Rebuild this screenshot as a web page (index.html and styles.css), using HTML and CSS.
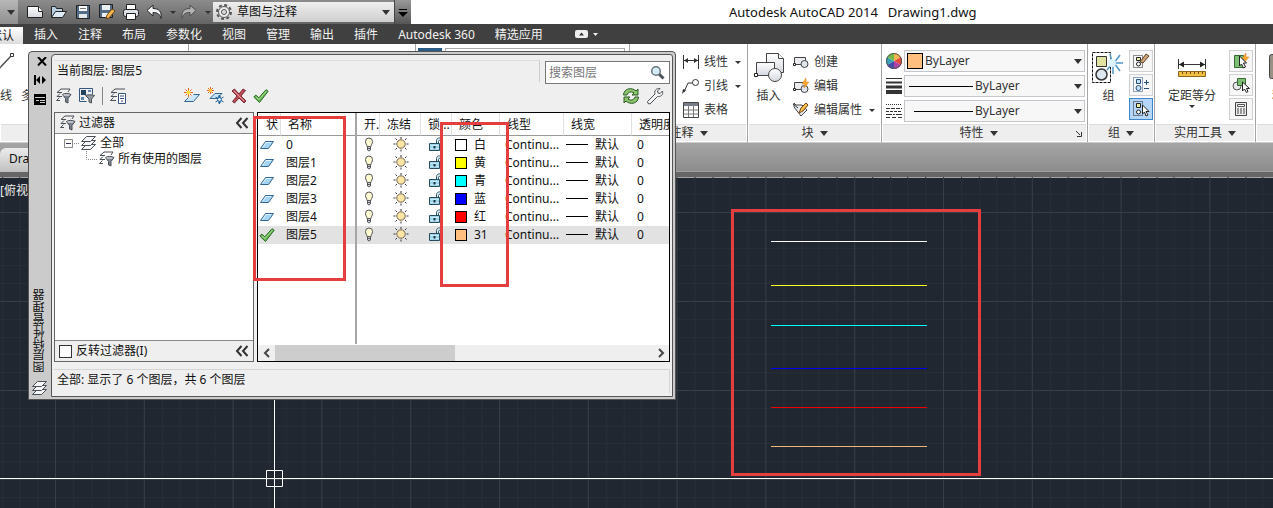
FILE: index.html
```
<!DOCTYPE html>
<html lang="zh-CN">
<head>
<meta charset="utf-8">
<title>Autodesk AutoCAD 2014 - Drawing1.dwg</title>
<link rel="stylesheet" href="styles.css">
</head>
<body>
<svg class="defs" aria-hidden="true">
  <defs>
    <linearGradient id="paper" x1="0" y1="0" x2="0" y2="1"><stop offset="0" stop-color="#fff"/><stop offset="1" stop-color="#d4d8e0"/></linearGradient>
    <symbol id="i-stack" viewBox="0 0 18 18"><g fill="#f4f5f6" stroke="#4a4f55"><path d="M1.500 15.500h9l5-5h-9z"/><path d="M1.500 11.500h9l5-5h-9z"/><path d="M1.500 7.500h9l5-5h-9z"/></g></symbol>
    <symbol id="i-filter" viewBox="0 0 18 18"><path d="M5 13.500H1.500l3-3M7 9.500H2l3-3M7 5.500H2l4-3.500h9l-2 3" fill="none" stroke="#4a4f55"/><path d="M7.500 7.500c2-1.500 6-1.500 8.500 0l-3 4v4.500l-2.500-1v-3.500z" fill="#7c8390" stroke="#4a4f55"/><path d="M8.500 8h6" stroke="#fff"/></symbol>
    <symbol id="i-group-filter" viewBox="0 0 18 18"><path d="M1.500 1.500h13v6M1.500 1.500v13h7" fill="none" stroke="#36577b"/><path d="M3 3h5v5H3z" fill="#23425f"/><path d="M10 3h3v2h-3zM3 10h3v3H3z" fill="#5c87af"/><path d="M7.500 8.500c2-1 6-1 9 0l-3 3.500v4l-2.500-1v-3z" fill="#9299a3" stroke="#4a4f55"/></symbol>
    <symbol id="i-states" viewBox="0 0 18 18"><path d="M7 13.500H1.500l3-3M8 9.500H2l3-3M8 5.500H2l4-3.500h10" fill="none" stroke="#4a4f55"/><path d="M9.500 6.500h7v10h-7z" fill="#fff" stroke="#36577b"/><path d="M11 9h4M11 11.500h4M12 14h2" stroke="#36577b"/></symbol>
    <symbol id="i-layer" viewBox="0 0 16 16"><path d="M1.500 11.500l5-7h8l-5 7z" fill="#a6d4f5" stroke="#34668f"/><path d="M3.500 10.500l3.500-5h5" stroke="#dff2ff" fill="none"/></symbol>
    <symbol id="i-new-layer" viewBox="0 0 18 18"><path d="M1.500 14.500h9l6-7h-6M1.500 14.500l4-4" fill="#c8e5fa" stroke="#34668f"/><path d="M5.500 1v9M1 5.500h9M2.500 2.500l6 6M8.500 2.500l-6 6" stroke="#e3641e"/><circle cx="5.500" cy="5.500" r="2" fill="#ffdf3e"/></symbol>
    <symbol id="i-new-frozen" viewBox="0 0 18 18"><path d="M3 11.500h7l5-5H8z" fill="#c8e5fa" stroke="#34668f"/><path d="M3.500 0v7M0 3.500h7M1 1l5 5M6 1L1 6" stroke="#e3641e"/><circle cx="3.500" cy="3.500" r="1.500" fill="#ffdf3e"/><path d="M12.500 8v9M8.500 10l8 5M8.500 15l8-5M11 9l3 1M11 16l3-1" stroke="#236197"/><circle cx="12.500" cy="12.500" r="2" fill="#d4edff" stroke="#236197"/></symbol>
    <symbol id="i-delete" viewBox="0 0 16 16"><path d="M1 3l2.500-2L8 6l4-5 2.500 1.500L10 8l5 5-2 2-5-5-4.500 5L1.500 13.500 6 8z" fill="#bd4c55" stroke="#722b34"/><path d="M3 3l10 10" stroke="#e6a0a6"/></symbol>
    <symbol id="i-check" viewBox="0 0 16 16"><path d="M.8 9l2-2 3 2.800L13 1.700l2.200 1.500L6.500 14.500z" fill="#67b653" stroke="#2d6b29"/><path d="M3 9l3 2.500L13.500 3" fill="none" stroke="#a5dc92"/></symbol>
    <symbol id="i-bulb" viewBox="0 0 16 16"><path d="M6 9.500c0-2-1.500-2.500-1.500-5a3.500 3.500 0 017 0c0 2.500-1.500 3-1.500 5z" fill="#fffbd0" stroke="#54565a"/><path d="M6.500 9.500h3V13L8 14 6.500 13z" fill="#cdd1d5" stroke="#54565a"/><path d="M6 11.500h4" stroke="#54565a"/></symbol>
    <symbol id="i-sun" viewBox="0 0 16 16"><path d="M8 0v2M8 12.500v2M.5 7h2M13.500 7h2M2.500 1.500L4 3M12 11l1.500 1.500M13.500 1.500L12 3M4 11l-1.500 1.500" stroke="#333"/><circle cx="8" cy="7" r="4.200" fill="#fde6a4" stroke="#6f6553"/></symbol>
    <symbol id="i-lock" viewBox="0 0 18 16"><path d="M8.500 7V3.500c0-3.500 6-3.500 6 0v2h-2V4.500c0-1.500-2-1.500-2 0V7" fill="#d7edf6" stroke="#2d5261"/><path d="M1.500 6.500h10v7h-10z" fill="#9fd4ea" stroke="#244c5c"/><path d="M2 8.500h9M2 11.500h9" stroke="#c5eafa"/><path d="M6.500 9v2.500" stroke="#153443" stroke-width="2"/></symbol>
    <symbol id="i-chevrons" viewBox="0 0 14 12"><path d="M6.500 1L2 6l4.500 5M12.500 1L8 6l4.500 5" fill="none" stroke="#333" stroke-width="2"/></symbol>
    <symbol id="i-search" viewBox="0 0 16 16"><path d="M9 9l4.500 4.500" stroke="#4c5259" stroke-width="3"/><circle cx="6" cy="6" r="4.300" fill="#d4ecf5" stroke="#697780" stroke-width="1.500"/></symbol>
    <symbol id="i-refresh" viewBox="0 0 18 18"><path d="M1.500 8C2 1 10 0 14 4l2-2v6h-6l2-2C9 4 6 5 5 8z" fill="#8cc46c" stroke="#285a26"/><path d="M16.500 10c-.5 7-8.500 8-12.500 4l-2 2v-6h6l-2 2c3 2 6 1 7-2z" fill="#8cc46c" stroke="#285a26"/></symbol>
    <symbol id="i-wrench" viewBox="0 0 18 18"><path d="M1.500 14.500L9 7c-1-3 1-6 5-5.500L11.500 4l.5 2 2 .5L16.500 4c1 4-2 6-5 5.500L4 17l-2-.5z" fill="#f3f4f5" stroke="#4f5459"/></symbol>
    <symbol id="i-rows" viewBox="0 0 16 16"><path d="M0 .5h16" stroke="#333"/><path d="M0 4.500h16" stroke="#333" stroke-width="2"/><path d="M0 9h16" stroke="#333" stroke-width="3"/><path d="M0 14h16" stroke="#333" stroke-width="4"/></symbol>
    <symbol id="i-dashes" viewBox="0 0 16 14"><g stroke="#333"><path d="M0 .5h16" stroke-dasharray="1 1"/><path d="M0 4.500h16" stroke-dasharray="4 1"/><path d="M0 7.500h16" stroke-dasharray="3 1"/><path d="M0 10.500h16" stroke-dasharray="6 1 2 1"/><path d="M0 13.500h16" stroke-dasharray="4 2"/></g></symbol>
    <symbol id="i-block" viewBox="0 0 16 14"><path d="M1.500 2.500h11v7h-11z" fill="#e9ebef" stroke="#444"/><circle cx="11.500" cy="9" r="3.500" fill="#dfe4ed" stroke="#444"/><path d="M.5 8.500h2v2h-2z" fill="#fff" stroke="#222"/></symbol>
  </defs>
</svg>

<header class="titlebar">
  <button class="app-menu" aria-label="应用程序菜单"><span class="tri"></span></button>
  <div class="quick-access">
    <button aria-label="新建"><svg width="18" height="16"><path d="M1.500 2.500h11l4 5v6h-15z" fill="url(#paper)" stroke="#222"/><path d="M12.500 2.500v5h4" fill="#fff" stroke="#222"/></svg></button>
    <button aria-label="打开"><svg width="18" height="16"><path d="M1.500 13.500v-11h4l1 2h6v3" fill="#b7cfdf" stroke="#222"/><path d="M1.500 13.500l4-6h11l-4 6z" fill="#dcebf4" stroke="#222"/></svg></button>
    <button aria-label="保存"><svg width="16" height="16"><path d="M1.500 1.500h13v13h-13z" fill="#526c85" stroke="#222"/><path d="M4 2h8v5H4z" fill="#fff"/><path d="M4 10h8v4H4z" fill="#e4e8ec"/><path d="M5 4.500h6" stroke="#777"/></svg></button>
    <button aria-label="另存为"><svg width="18" height="18"><path d="M1.500 1.500h13v13h-13z" fill="#526c85" stroke="#222"/><path d="M4 2h8v5H4zM4 10h8v4H4z" fill="#edf0f3"/><path d="M8 16l1-4 5-6 3 2-6 7z" fill="#f6b84e" stroke="#704611"/></svg></button>
    <button aria-label="打印"><svg width="18" height="18"><path d="M4.500 1.500h9v5h-9z" fill="#fff" stroke="#222"/><rect x="1.500" y="6.500" width="15" height="7" rx="2" fill="#dfe3e8" stroke="#222"/><path d="M4.500 10.500h9v6h-9z" fill="#fff" stroke="#222"/></svg></button>
    <button aria-label="放弃"><svg width="18" height="16"><path d="M1 6.500L7 1v3.500c6 0 9 3 8 10-1-4-3-6-8-6V12z" fill="#f0f2f5" stroke="#2b2b2b"/></svg></button>
    <button class="drop" aria-label="放弃列表"><span class="tri small"></span></button>
    <button aria-label="重做"><svg width="18" height="16"><path d="M15 6.500L9 1v3.500c-6 0-9 3-8 10 1-4 3-6 8-6V12z" fill="#b1b1b1" stroke="#4d4d4d"/></svg></button>
    <button class="drop" aria-label="重做列表"><span class="tri small"></span></button>
    <div class="workspace">
      <svg width="18" height="18"><circle cx="9" cy="9" r="7" fill="none" stroke="#555" stroke-width="2" stroke-dasharray="3 2.500"/><circle cx="9" cy="9" r="5.500" fill="#ececec" stroke="#555"/><circle cx="9" cy="9" r="2.500" fill="#ddd" stroke="#555"/></svg>
      <select aria-label="工作空间"><option>草图与注释</option></select>
      <span class="tri"></span>
    </div>
    <button class="customize" aria-label="自定义快速访问工具栏"><svg width="10" height="9"><path d="M1 1.500h8" stroke="#000"/><path d="M0 4h10L5 9z"/></svg></button>
  </div>
  <h1 class="app-title"><span>Autodesk AutoCAD 2014</span><span>Drawing1.dwg</span></h1>
</header>

<nav class="tabs">
  <a class="active" href="#">默认</a><a href="#">插入</a><a href="#">注释</a><a href="#">布局</a><a href="#">参数化</a><a href="#">视图</a><a href="#">管理</a><a href="#">输出</a><a href="#">插件</a><a href="#">Autodesk 360</a><a href="#">精选应用</a>
  <button class="minimize" aria-label="最小化功能区"><svg width="24" height="10"><rect x="0" y="1" width="13" height="8" rx="2" fill="#eee"/><path d="M4 6.500l2.500-3L9 6.500z" fill="#333"/><path d="M18 4h5l-2.500 3z" fill="#eee"/></svg></button>
</nav>

<section class="ribbon">
  <div class="panel draw">
    <div class="panel-body">
      <button class="big"><svg width="32" height="34"><path d="M8 26L28 5" stroke="#555" stroke-width="1.500"/><path d="M26.500 3.500h3v3h-3z" fill="#fff" stroke="#333"/></svg><span>直线</span></button>
      <button class="big"><svg width="32" height="34"><path d="M8 24h10l8-14" fill="none" stroke="#555"/><path d="M6.500 22.500h3v3h-3z" fill="#fff" stroke="#333"/></svg><span>多段线</span></button>
    </div>
    <div class="panel-title">绘图</div>
  </div>
  <div class="panel modify"><div class="panel-body"></div><div class="panel-title">修改</div></div>
  <div class="panel layers"><div class="panel-body"><span class="layer-chip"></span><span class="layer-field"></span></div><div class="panel-title">图层</div></div>
  <div class="panel annotate">
    <div class="panel-body rows">
      <button class="row"><svg width="18" height="16"><path d="M1.500 1v14M16.500 1v14M2 6.500h14" stroke="#333"/><path d="M2 6.500l4-2.500v5zM16 6.500l-4-2.500v5z" fill="#333"/></svg>线性<span class="tri small"></span></button>
      <button class="row"><svg width="18" height="16"><path d="M2 14L6 5h5" fill="none" stroke="#333"/><path d="M0 16l1-5 3 1z" fill="#333"/><circle cx="13.500" cy="4.500" r="3" fill="#fff" stroke="#333"/></svg>引线<span class="tri small"></span></button>
      <button class="row"><svg width="18" height="16"><path d="M1.500 .5h15v15h-15z" fill="#fff" stroke="#444"/><path d="M2 1h14v3H2z" fill="#777e8a"/><path d="M2 8h14M2 12h14M6.500 4v11M11.500 4v11" stroke="#777"/></svg>表格</button>
    </div>
    <div class="panel-title">注释<span class="tri"></span></div>
  </div>
  <div class="panel block">
    <div class="panel-body">
      <button class="big"><svg width="32" height="34"><path d="M13.500 3.500h12l5 5v14h-17z" fill="url(#paper)" stroke="#444"/><path d="M25.500 3.500v5h5" fill="#fff" stroke="#444"/><path d="M3.500 12.500h18v13h-18z" fill="url(#paper)" stroke="#444"/><circle cx="22" cy="25" r="6.500" fill="url(#paper)" stroke="#444"/><path d="M1.500 23.500h3v3h-3z" fill="#fff" stroke="#222"/></svg><span>插入</span></button>
      <div class="rows">
        <button class="row"><svg width="16" height="14"><use href="#i-block"/></svg>创建</button>
        <button class="row"><svg width="16" height="16"><use href="#i-block" y="2" width="16" height="14"/><path d="M13 0L9 6h3l-1 4 5-6h-3z" fill="#ffac2c" stroke="#d87914" stroke-width=".5"/></svg>编辑</button>
        <button class="row"><svg width="16" height="16"><path d="M1 1v4l7 9 6-6-5-5H3z" fill="#e9ebef" stroke="#444"/><path d="M6 11l2-5 5-5 2 2-5 6z" fill="#fac24c" stroke="#714411"/><path d="M0 2l5 4" stroke="#333"/></svg>编辑属性<span class="tri small"></span></button>
      </div>
    </div>
    <div class="panel-title">块<span class="tri"></span></div>
  </div>
  <div class="panel props">
    <div class="panel-body rows">
      <div class="prop-row"><svg width="16" height="16"><path d="M8 8V0a8 8 0 017 4z" fill="#f2b64f"/><path d="M8 8l7-4a8 8 0 010 8z" fill="#e94938"/><path d="M8 8l7 4a8 8 0 01-7 4z" fill="#b044a6"/><path d="M8 8v8a8 8 0 01-7-4z" fill="#454ba9"/><path d="M8 8l-7 4a8 8 0 010-8z" fill="#38a3b5"/><path d="M8 8L1 4a8 8 0 017-4z" fill="#75b947"/><circle cx="8" cy="8" r="7.500" fill="none" stroke="#555"/></svg><div class="combo color"><i class="swatch peach"></i><select aria-label="对象颜色"><option>ByLayer</option></select><span class="tri"></span></div></div>
      <div class="prop-row"><svg width="16" height="16"><use href="#i-rows"/></svg><div class="combo"><i class="sample"></i><select aria-label="线宽"><option>ByLayer</option></select><span class="tri"></span></div></div>
      <div class="prop-row"><svg width="16" height="14"><use href="#i-dashes"/></svg><div class="combo"><i class="sample short"></i><select aria-label="线型"><option>ByLayer</option></select><span class="tri"></span></div></div>
    </div>
    <div class="panel-title">特性<span class="tri"></span><svg class="launcher" width="6" height="6"><path d="M0 0l4 4M5.500 1v4.500H1" fill="none" stroke="#333"/></svg></div>
  </div>
  <div class="panel group">
    <div class="panel-body">
      <button class="big"><svg width="32" height="34"><path d="M1.500 2.500h18v30h-18z" fill="none" stroke="#111" stroke-dasharray="3 1"/><path d="M5.500 6.500h10v10h-10z" fill="#e0e3a0" stroke="#333"/><circle cx="10.500" cy="24.500" r="5.500" fill="#dce7ef" stroke="#333" stroke-width="1.500"/><g stroke="#4e96c8" stroke-width="1.500"><path d="M23 13l6-8M23 13h9M23 13l6 8M22 14v10M21 12l-2-8M21 14l-5 6"/></g><circle cx="21" cy="13" r="4" fill="#dff2ff"/></svg><span>组</span></button>
      <div class="tools">
        <button class="tool" aria-label="组编辑"><svg width="18" height="18"><path d="M1.500 3.500h9v12h-9z" fill="none" stroke="#222" stroke-dasharray="1 1"/><path d="M4.500 5.500h4v3h-4z" fill="#eef0a7" stroke="#222"/><circle cx="6.500" cy="12" r="2" fill="#fff" stroke="#222"/><path d="M8 10l6-8 3 2-6 7z" fill="#d2a271" stroke="#594634"/></svg></button>
        <button class="tool" aria-label="添加到组"><svg width="18" height="18"><path d="M1.500 1.500h9v14h-9z" fill="none" stroke="#245078" stroke-dasharray="1 1"/><path d="M4.500 3.500h4v4h-4z" fill="#c7e1f6" stroke="#245078"/><circle cx="6.500" cy="12" r="2.500" fill="#c7e1f6" stroke="#245078"/><path d="M12 6.500h5M14.500 4v5M12 12.500h5" stroke="#245078"/></svg></button>
        <button class="tool on" aria-label="组选择"><svg width="18" height="18"><path d="M1.500 1.500h9v14h-9z" fill="none" stroke="#222" stroke-dasharray="1 1"/><path d="M4.500 3.500h4v4h-4z" fill="#eef0a7" stroke="#222"/><circle cx="6.500" cy="12" r="2" fill="#fff" stroke="#222"/><path d="M10.500 5v9l2-2 1.500 4 2-1-2-3.500h3z" fill="#fff" stroke="#222"/></svg></button>
      </div>
    </div>
    <div class="panel-title">组<span class="tri"></span></div>
  </div>
  <div class="panel utils">
    <div class="panel-body">
      <button class="big"><svg width="30" height="34"><path d="M1.500 9v10M28.500 9v10M2 14.500h26" stroke="#333"/><path d="M2 14.500l5-3v6zM28 14.500l-5-3v6z" fill="#222"/><path d="M1.500 21.500h27v5h-27z" fill="#f2bf3f" stroke="#8b651c"/><path d="M5.500 22v2M9.500 22v2M13.500 22v2M17.500 22v2M21.500 22v2M25.500 22v2" stroke="#6d4c12"/></svg><span>定距等分</span><span class="tri small"></span></button>
      <div class="tools">
        <button class="tool" aria-label="快速选择"><svg width="18" height="18"><path d="M2.500 3.500h9v12h-9z" fill="#7fbe75" stroke="#356b33"/><path d="M14 1l-4 6h3l-1 4 5-6h-3z" fill="#ffac2c" stroke="#d87914" stroke-width=".5"/><path d="M7.500 4v10l2-2 2 4 2-1-2-4h3z" fill="#fff" stroke="#222"/></svg></button>
        <button class="tool" aria-label="全部选择"><svg width="18" height="18"><circle cx="5" cy="10" r="4" fill="#e5e7ea" stroke="#555"/><path d="M5.500 2.500h8v7h-8z" fill="#7fbe75" stroke="#356b33"/><path d="M10.500 6v9l2-2 2 3.500 1.500-1-1.500-3h3z" fill="#fff" stroke="#222"/></svg></button>
        <button class="tool" aria-label="快速计算器"><svg width="18" height="18"><path d="M3.500 2.500h11v13h-11z" fill="#eee" stroke="#444"/><path d="M5.500 4.500h7v2h-7z" fill="#fff" stroke="#555"/><path d="M5 9h8M5 11h8M5 13h8" stroke="#444" stroke-dasharray="2 1"/></svg></button>
      </div>
    </div>
    <div class="panel-title">实用工具<span class="tri"></span></div>
  </div>
  <div class="panel clipboard">
    <div class="panel-body"><button class="big"><svg width="32" height="34"><rect x="1.500" y="4.500" width="26" height="24" rx="2" fill="#9a9185" stroke="#444"/><path d="M7 9h17v16H7z" fill="#eee"/></svg><span>粘贴</span></button></div>
    <div class="panel-title"></div>
  </div>
</section>

<div class="file-tabs"><a class="file-tab" href="#">Drawing1</a></div>

<main class="canvas">
  <svg class="drawing" width="100%" height="100%">
    <defs>
      <pattern id="grid" x="55" y="35" width="88.800" height="89" patternUnits="userSpaceOnUse">
        <path d="M18.500 0v89M36.500 0v89M53.500 0v89M71.500 0v89M0 18.500h89M0 36.500h89M0 53.500h89M0 71.500h89" stroke="#262d37"/>
        <path d="M.5 0v89M0 .5h89" stroke="#363e48"/>
      </pattern>
    </defs>
    <rect width="100%" height="100%" fill="url(#grid)"/>
    <g stroke="#fff" fill="none"><path d="M274.500 200v400M0 301.500h4000M266.500 293.500h16v16h-16z"/></g>
    <path d="M771 64.500h156" stroke="#fff"/>
    <path d="M771 108.500h156" stroke="#ffff20"/>
    <path d="M771 148.500h156" stroke="#00ffff"/>
    <path d="M771 191.500h156" stroke="#0000f0"/>
    <path d="M771 230.500h156" stroke="#f00000"/>
    <path d="M771 269.500h156" stroke="#f0b878"/>
  </svg>
  <span class="view-label">[俯视]</span>
</main>

<section class="palette" aria-label="图层特性管理器">
  <div class="grip">
    <button aria-label="关闭"><svg width="10" height="9"><path d="M1 0l8 8.500M9 0L1 8.500" stroke="#000" stroke-width="2"/></svg></button>
    <button aria-label="自动隐藏"><svg width="13" height="10"><path d="M1 0v10" stroke="#000" stroke-width="2"/><path d="M6 1v8L2 5zM8 1v8l4-4z"/></svg></button>
    <button aria-label="特性"><svg width="12" height="11"><path d="M0 0h12v11H0z"/><path d="M1 3.500h10M6 6.500h5M6 8.500h5M2 6.500h3" stroke="#ccc" fill="none"/></svg></button>
    <span class="grip-title">图层特性管理器</span>
    <svg width="18" height="18"><use href="#i-stack"/></svg>
  </div>
  <div class="content">
    <div class="top">
      <div class="current">当前图层: 图层5</div>
      <label class="search"><input type="text" placeholder="搜索图层" aria-label="搜索图层"><svg width="16" height="16"><use href="#i-search"/></svg></label>
    </div>
    <div class="toolbar">
      <div class="set left">
        <button aria-label="新建特性过滤器"><svg width="18" height="18"><use href="#i-filter"/></svg></button>
        <button aria-label="新建组过滤器"><svg width="18" height="18"><use href="#i-group-filter"/></svg></button>
        <i class="sep"></i>
        <button aria-label="图层状态管理器"><svg width="18" height="18"><use href="#i-states"/></svg></button>
      </div>
      <div class="set">
        <button aria-label="新建图层"><svg width="18" height="18"><use href="#i-new-layer"/></svg></button>
        <button aria-label="新建冻结图层"><svg width="18" height="18"><use href="#i-new-frozen"/></svg></button>
        <button aria-label="删除图层"><svg width="16" height="16"><use href="#i-delete"/></svg></button>
        <button aria-label="置为当前"><svg width="16" height="16"><use href="#i-check"/></svg></button>
      </div>
      <div class="set right">
        <button aria-label="刷新"><svg width="18" height="18"><use href="#i-refresh"/></svg></button>
        <button aria-label="设置"><svg width="18" height="18"><use href="#i-wrench"/></svg></button>
      </div>
    </div>
    <div class="panes">
      <div class="filters">
        <div class="filters-head"><svg width="18" height="18"><use href="#i-filter"/></svg><span>过滤器</span><button aria-label="收拢"><svg width="14" height="12"><use href="#i-chevrons"/></svg></button></div>
        <ul class="tree">
          <li><svg width="16" height="16"><path d="M.5 4.500h8v8h-8z" fill="#fff" stroke="#888"/><path d="M2 8.500h5" stroke="#335"/><path d="M10 8.500h6" stroke="#888" stroke-dasharray="1 1"/></svg><svg width="18" height="18"><use href="#i-stack"/></svg>全部</li>
          <li class="child"><svg width="12" height="16"><path d="M.5 0v8.500H12" fill="none" stroke="#888" stroke-dasharray="1 1"/></svg><svg width="18" height="18"><use href="#i-filter"/></svg>所有使用的图层</li>
        </ul>
        <div class="filters-foot"><label><input type="checkbox">反转过滤器(I)</label><button aria-label="收拢过滤器"><svg width="14" height="12"><use href="#i-chevrons"/></svg></button></div>
      </div>
      <div class="list">
        <div class="list-view">
          <table>
            <colgroup><col class="c-state"><col class="c-name"><col class="c-on"><col class="c-freeze"><col class="c-lock"><col class="c-color"><col class="c-type"><col class="c-weight"><col class="c-trans"></colgroup>
            <thead><tr><th class="state">状</th><th>名称</th><th>开.</th><th>冻结</th><th>锁...</th><th>颜色</th><th>线型</th><th>线宽</th><th>透明度</th></tr></thead>
            <tbody>
              <tr><td class="state"><svg width="16" height="16"><use href="#i-layer"/></svg></td><td>0</td><td class="icon"><svg width="16" height="16"><use href="#i-bulb"/></svg></td><td class="icon"><svg width="16" height="16"><use href="#i-sun"/></svg></td><td class="icon"><svg width="18" height="16"><use href="#i-lock"/></svg></td><td class="color"><i class="swatch white"></i>白</td><td class="type">Continu...</td><td class="weight"><i class="dash"></i>默认</td><td class="trans">0</td></tr>
              <tr><td class="state"><svg width="16" height="16"><use href="#i-layer"/></svg></td><td>图层1</td><td class="icon"><svg width="16" height="16"><use href="#i-bulb"/></svg></td><td class="icon"><svg width="16" height="16"><use href="#i-sun"/></svg></td><td class="icon"><svg width="18" height="16"><use href="#i-lock"/></svg></td><td class="color"><i class="swatch yellow"></i>黄</td><td class="type">Continu...</td><td class="weight"><i class="dash"></i>默认</td><td class="trans">0</td></tr>
              <tr><td class="state"><svg width="16" height="16"><use href="#i-layer"/></svg></td><td>图层2</td><td class="icon"><svg width="16" height="16"><use href="#i-bulb"/></svg></td><td class="icon"><svg width="16" height="16"><use href="#i-sun"/></svg></td><td class="icon"><svg width="18" height="16"><use href="#i-lock"/></svg></td><td class="color"><i class="swatch cyan"></i>青</td><td class="type">Continu...</td><td class="weight"><i class="dash"></i>默认</td><td class="trans">0</td></tr>
              <tr><td class="state"><svg width="16" height="16"><use href="#i-layer"/></svg></td><td>图层3</td><td class="icon"><svg width="16" height="16"><use href="#i-bulb"/></svg></td><td class="icon"><svg width="16" height="16"><use href="#i-sun"/></svg></td><td class="icon"><svg width="18" height="16"><use href="#i-lock"/></svg></td><td class="color"><i class="swatch blue"></i>蓝</td><td class="type">Continu...</td><td class="weight"><i class="dash"></i>默认</td><td class="trans">0</td></tr>
              <tr><td class="state"><svg width="16" height="16"><use href="#i-layer"/></svg></td><td>图层4</td><td class="icon"><svg width="16" height="16"><use href="#i-bulb"/></svg></td><td class="icon"><svg width="16" height="16"><use href="#i-sun"/></svg></td><td class="icon"><svg width="18" height="16"><use href="#i-lock"/></svg></td><td class="color"><i class="swatch red"></i>红</td><td class="type">Continu...</td><td class="weight"><i class="dash"></i>默认</td><td class="trans">0</td></tr>
              <tr class="selected"><td class="state"><svg width="16" height="16"><use href="#i-check"/></svg></td><td>图层5</td><td class="icon"><svg width="16" height="16"><use href="#i-bulb"/></svg></td><td class="icon"><svg width="16" height="16"><use href="#i-sun"/></svg></td><td class="icon"><svg width="18" height="16"><use href="#i-lock"/></svg></td><td class="color"><i class="swatch peach"></i>31</td><td class="type">Continu...</td><td class="weight"><i class="dash"></i>默认</td><td class="trans">0</td></tr>
            </tbody>
          </table>
          <i class="freeze-line"></i>
        </div>
        <div class="scrollbar">
          <button aria-label="向左滚动"><svg width="8" height="10"><path d="M6 1L2 5l4 4" fill="none" stroke="#444" stroke-width="2"/></svg></button>
          <div class="track"><div class="thumb"></div></div>
          <button aria-label="向右滚动"><svg width="8" height="10"><path d="M2 1l4 4-4 4" fill="none" stroke="#444" stroke-width="2"/></svg></button>
        </div>
      </div>
    </div>
    <div class="status">全部: 显示了 6 个图层，共 6 个图层</div>
  </div>
</section>

<div class="mark mark-names"></div>
<div class="mark mark-colors"></div>
<div class="mark mark-lines"></div>
</body>
</html>
```
FILE: styles.css
```
* { box-sizing: border-box; }
body {
  margin: 0;
  height: 100vh;
  display: flex;
  flex-direction: column;
  position: relative;
  overflow: hidden;
  background: #fff;
  color: #111;
  font: 12px/18px "Noto Sans", "Noto Sans CJK SC", sans-serif;
}
button, select, input { font: inherit; color: inherit; margin: 0; }
button { padding: 0; border: 0; background: none; display: flex; align-items: center; justify-content: center; }
a { color: inherit; text-decoration: none; }
svg { display: block; flex: none; }
i { display: block; flex: none; }
.defs { position: absolute; width: 0; height: 0; }
.tri { flex: none; width: 0; height: 0; border: 4px solid transparent; border-top: 5px solid #333; border-bottom: 0; }
.tri.small { border-width: 3px 3px 0; }

/* Title bar */
.titlebar { display: flex; flex: none; height: 24px; }
.app-menu { width: 18px; background: linear-gradient(#b8b8b8, #8f8f8f); padding-left: 4px; }
.quick-access { width: 393px; display: flex; align-items: center; background: linear-gradient(#8c8c8c, #646464); padding-left: 5px; }
.quick-access > button { width: 24px; }
.quick-access > .drop { width: 11px; }
.workspace { flex: 1; height: 20px; display: grid; grid-template-columns: 22px 1fr 12px; align-items: center; padding-left: 2px; background: linear-gradient(#eee, #cfcfcf); }
.workspace select { appearance: none; border: 0; background: none; padding: 0; outline: 0; }
.quick-access > .customize { width: 17px; height: 24px; background: linear-gradient(#999, #555); border-left: 1px solid #444; }
.app-title { flex: 1; margin: 0; display: flex; align-items: center; gap: 10px; padding-left: 318px; font-size: 13px; font-weight: 400; white-space: nowrap; }

/* Ribbon tabs */
.tabs { flex: none; height: 20px; display: flex; align-items: center; gap: 20px; background: #404040; color: #f2f2f2; }
.tabs a { line-height: 18px; padding-top: 2px; white-space: nowrap; }
.tabs .active { width: 23px; height: 17px; align-self: flex-end; direction: rtl; padding: 0 9px 0 0; margin-right: -9px; overflow: hidden; background: linear-gradient(#fff, #dcdcdc); color: #222; line-height: 17px; }
.minimize { margin-left: 12px; }

/* Ribbon */
.ribbon { flex: none; height: 99px; display: flex; overflow: hidden; color: #333; border-bottom: 1px solid #ccc; }
.panel { flex: none; display: flex; flex-direction: column; border-right: 1px solid #a5a5a5; background: #fff; white-space: nowrap; }
.panel-body { flex: 1; display: flex; padding-top: 6px; }
.panel-title { height: 17px; display: flex; align-items: center; justify-content: center; gap: 6px; margin: 0 1px 1px; background: #eee; border-top: 1px solid #ddd; }
.rows { display: flex; flex-direction: column; }
.row { height: 24px; justify-content: flex-start; gap: 4px; }
.row .tri { margin-left: 2px; }
.big { flex-direction: column; justify-content: flex-start; }
.big > span:first-of-type { padding-top: 3px; }
.tools { display: grid; align-content: start; gap: 2px; }
.tool { width: 24px; height: 22px; border: 1px solid #d0d0d4; background: #f7f7f7; }
.tool.on { background: #b5d6f6; border-color: #3b86cc; }
.draw { width: 189px; overflow: hidden; }
.draw .panel-body { margin-left: -18px; gap: 3px; }
.draw .big { width: 36px; }
.modify { width: 227px; }
.layers { width: 214px; }
.layers .panel-body { padding: 4px 4px 0 2px; }
.layer-chip { width: 24px; height: 22px; background: #2b5c87; }
.layer-field { flex: 1; height: 22px; margin-left: 3px; border: 1px solid #aaa; }
.annotate { width: 118px; }
.annotate .row { padding-left: 52px; }
.annotate .row .tri { margin-left: 3px; }
.block { width: 134px; }
.block .big { width: 41px; }
.block .rows { padding-left: 4px; }
.block .row { gap: 5px; }
.props { width: 206px; }
.props .panel-body { gap: 3px; padding-left: 4px; padding-right: 2px; }
.prop-row { display: flex; align-items: center; gap: 2px; height: 22px; }
.combo { flex: 1; height: 22px; display: flex; align-items: center; padding: 0 2px 0 4px; border: 1px solid #c5c5cc; background: #f7f7f7; }
.combo select { flex: 1; min-width: 0; appearance: none; border: 0; padding: 0 2px; background: none; outline: 0; }
.sample { width: 64px; height: 1px; background: #000; }
.sample.short { width: 59px; margin-left: 5px; }
.swatch { width: 12px; height: 12px; border: 1px solid #000; }
.combo .swatch { width: 16px; height: 16px; margin-left: -2px; }
.props .panel-title { position: relative; padding-right: 12px; }
.launcher { position: absolute; right: 4px; top: 6px; }
.group { width: 67px; }
.group .big { width: 41px; }
.group .big svg { margin-left: -4px; }
.utils { width: 101px; }
.utils .big { width: 74px; }
.clipboard { flex: 1; min-width: 60px; }
.clipboard .big { padding-left: 12px; }
.white { background: #fff; }
.yellow { background: #ff0; }
.cyan { background: #0ff; }
.blue { background: #00f; }
.red { background: #f00; }
.peach { background: #ffbf7f; }

/* File tabs and drawing area */
.file-tabs { flex: none; height: 34px; display: flex; align-items: flex-end; background: linear-gradient(#a5a5a5, #8c8c8c); border-bottom: 5px solid #666; box-shadow: inset 0 -1px #a0a0a0; }
.file-tab { padding: 0 24px 2px 9px; line-height: 22px; border-radius: 6px 0 0; background: linear-gradient(#ececec, #c0c0c0); }
.canvas { flex: 1; min-height: 0; position: relative; background: #212730; border-top: 1px solid #a5a5a5; }
.drawing { position: absolute; inset: -1px 0 0; height: calc(100% + 1px); }
.view-label { position: relative; display: block; padding-top: 4px; color: #eee; }

/* Layer palette */
.palette { position: absolute; left: 28px; top: 51px; width: 648px; display: flex; padding: 2px 2px 2px 0; border: 1px solid #555; border-radius: 4px 4px 1px 1px; background: #cbcbcb; }
.grip { width: 22px; display: flex; flex-direction: column; align-items: center; gap: 9px; padding: 3px 0 0; }
.grip > button:first-child { margin-left: 3px; }
.grip-title { margin-top: auto; margin-bottom: -3px; writing-mode: vertical-rl; transform: rotate(180deg); }
.content { flex: 1; min-width: 0; border: 1px solid #555; border-radius: 4px 3px 0 0; background: #efefef; padding: 5px 2px 3px; }
.top { display: flex; gap: 5px; }
.current { flex: 1; height: 22px; border-top: 1px solid #ddd; border-right: 1px solid #ccc; padding: 1px 3px; }
.search { width: 125px; height: 23px; margin-top: 1px; display: flex; align-items: center; border: 1px solid #777; background: #fff; padding: 0 3px; }
.search input { flex: 1; min-width: 0; border: 0; padding: 0; outline: 0; }
.search input::placeholder { color: #777; opacity: 1; }
.toolbar { display: flex; height: 28px; align-items: center; padding: 0 6px 4px 1px; }
.set { display: flex; align-items: center; gap: 6px; }
.set.left { width: 128px; gap: 5px; }
.set.right { margin-left: auto; }
.sep { width: 1px; height: 18px; margin: 0 1px; background: #888; }
.panes { display: flex; gap: 3px; height: 250px; }
.filters { width: 200px; display: flex; flex-direction: column; border: 1px solid #666; background: #efefef; }
.filters-head, .filters-foot { height: 21px; display: flex; align-items: center; padding: 0 4px; }
.filters-head { border-bottom: 1px solid #888; }
.filters-head svg + span { margin-left: 2px; }
.filters-head button, .filters-foot button { margin-left: auto; }
.filters-foot { border-top: 1px solid #888; }
.filters-foot label { display: flex; align-items: center; gap: 4px; }
.filters-foot input { appearance: none; width: 13px; height: 13px; border: 1px solid #333; background: #fff; }
.tree { flex: 1; margin: 0; padding: 1px 9px; list-style: none; background: #fff; }
.tree li { display: flex; align-items: center; height: 16px; }
.tree li svg + svg { margin-right: 2px; }
.tree .child { padding-left: 22px; }
.list { flex: 1; min-width: 0; display: flex; flex-direction: column; border: 1px solid #000; background: #fff; }
.list-view { flex: 1; min-height: 0; overflow: hidden; position: relative; }
.freeze-line { position: absolute; left: 97px; top: 0; bottom: 1px; width: 2px; background: #a5a5a5; }
table { width: 432px; table-layout: fixed; border-collapse: separate; border-spacing: 0; }
.c-state { width: 23px; }
.c-name { width: 76px; }
.c-on { width: 23px; }
.c-freeze { width: 41px; }
.c-lock { width: 31px; }
.c-color { width: 48px; }
.c-type { width: 64px; }
.c-weight { width: 68px; }
.c-trans { width: 58px; }
th { height: 23px; padding: 2px 0 0 7px; line-height: 16px; text-align: left; font-weight: 400; white-space: nowrap; border-bottom: 1px solid #999; border-right: 1px solid #e0e0e0; }
th.state { padding-left: 8px; }
td { height: 18px; padding: 0 0 0 5px; line-height: 18px; white-space: nowrap; }
td.state { padding-left: 1px; }
td.icon { padding: 0; }
td.icon svg { margin: 0 auto; }
td.color .swatch, td.weight .dash { display: inline-block; vertical-align: middle; }
td.color { padding-left: 3px; }
td.color .swatch { margin: -2px 7px 0 0; }
td.weight { padding-left: 2px; }
.dash { width: 22px; height: 1px; background: #000; margin: -2px 7px 0 0; }
.selected td { background: #e2e2e2; }
.scrollbar { height: 16px; display: flex; background: #efefef; }
.scrollbar button { width: 17px; }
.track { flex: 1; }
.thumb { width: 180px; height: 16px; background: #cdcdcd; }
.status { margin-top: 7px; border-top: 1px solid #d5d5d5; border-right: 1px solid #d5d5d5; padding: 1px 3px 4px; }

/* Highlight frames */
.mark { position: absolute; border: 3px solid #e43e3e; }
.mark-names { left: 253px; top: 116px; width: 93px; height: 165px; }
.mark-colors { left: 440px; top: 122px; width: 69px; height: 165px; }
.mark-lines { left: 731px; top: 209px; width: 250px; height: 267px; }
```
